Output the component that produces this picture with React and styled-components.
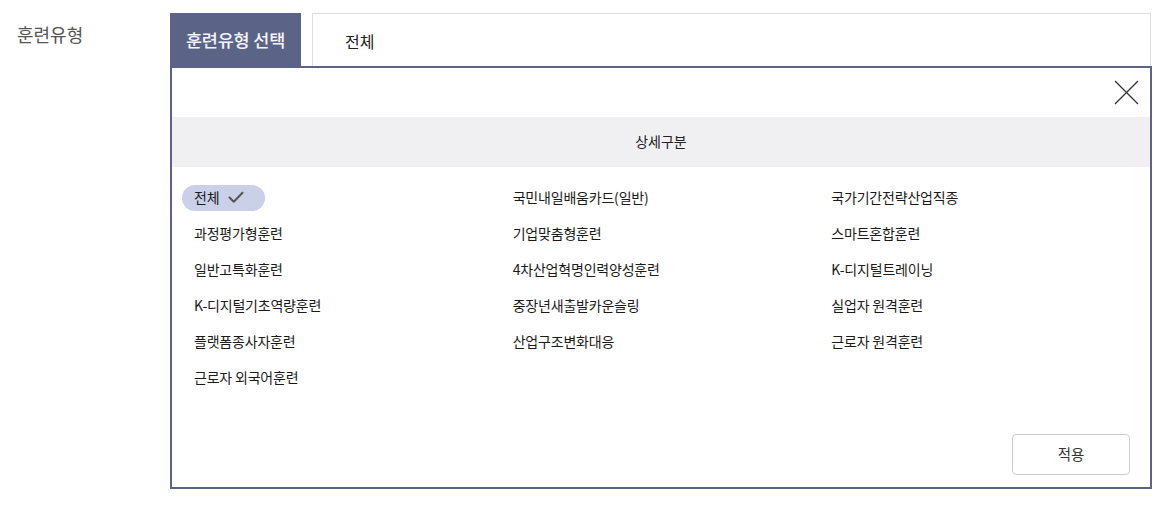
import React from "react";
import styled, { createGlobalStyle } from "styled-components";

const Global = createGlobalStyle`
  html, body { margin: 0; padding: 0; background: #fff; }
  body { font-family: "Noto Sans CJK KR", "Noto Sans", sans-serif; color: #222; }
`;

const Page = styled.div`
  display: flex;
  align-items: flex-start;
  padding-top: 13px;
  width: 1169px;
  height: 510px;
  box-sizing: border-box;
`;

const Label = styled.div`
  width: 170px;
  box-sizing: border-box;
  padding-left: 17px;
  padding-top: 7px;
  font-size: 18px;
  line-height: 28px;
  color: #555;
`;

const Field = styled.div`
  width: 982px;
  display: flex;
  flex-direction: column;
`;

const TopBar = styled.div`
  display: flex;
  gap: 11px;
  height: 53px;
`;

const Tab = styled.div`
  width: 131px;
  background: #5b6387;
  color: #f4f4f8;
  font-size: 17.5px;
  font-weight: 500;
  display: flex;
  align-items: center;
  justify-content: center;
  letter-spacing: -0.2px;
  padding-bottom: 1px;
  box-sizing: border-box;
`;

const Input = styled.div`
  flex: 1;
  border: 1px solid #dedede;
  border-bottom: none;
  margin-right: 1px;
  display: flex;
  align-items: center;
  padding-left: 32px;
  padding-top: 1px;
  font-size: 16px;
  color: #222;
  box-sizing: border-box;
`;

const Panel = styled.div`
  border: 2px solid #5b6387;
  height: 423px;
  box-sizing: border-box;
  display: flex;
  flex-direction: column;
`;

const CloseRow = styled.div`
  height: 49px;
  display: flex;
  justify-content: flex-end;
  align-items: center;
  padding-right: 11px;
`;

const CloseButton = styled.button`
  border: none;
  background: none;
  padding: 0;
  width: 25px;
  height: 25px;
  cursor: pointer;
  display: flex;
`;

const Header = styled.div`
  height: 50px;
  background: #f0f0f3;
  display: flex;
  align-items: center;
  justify-content: center;
  font-size: 14px;
  color: #222;
  padding-bottom: 3px;
  box-sizing: border-box;
`;

const Grid = styled.div`
  display: grid;
  grid-template-columns: repeat(3, 1fr);
  row-gap: 10px;
  padding: 18px 12px 0 10px;
`;

const Item = styled.div`
  height: 26px;
  display: flex;
  align-items: center;
`;

const Option = styled.span`
  display: inline-flex;
  align-items: center;
  gap: 9px;
  height: 26px;
  box-sizing: border-box;
  padding: 0 ${(p) => (p.$selected ? "21px" : "12px")} 3px 12px;
  border-radius: 13px;
  background: ${(p) => (p.$selected ? "#c9d0e7" : "transparent")};
  font-size: 14px;
  color: #1a1a1a;
  letter-spacing: -0.2px;
  white-space: nowrap;

  svg { margin-top: 2px; }
`;

const Footer = styled.div`
  margin-top: auto;
  display: flex;
  justify-content: flex-end;
  padding: 0 20px 12px 0;
`;

const ApplyButton = styled.button`
  width: 118px;
  height: 41px;
  border: 1px solid #cccccc;
  border-radius: 4px;
  background: #fff;
  font-family: "Noto Sans CJK KR", "Noto Sans", sans-serif;
  font-size: 14.5px;
  color: #333;
  padding-bottom: 3px;
  cursor: pointer;
`;

const options = [
  "전체",
  "국민내일배움카드(일반)",
  "국가기간전략산업직종",
  "과정평가형훈련",
  "기업맞춤형훈련",
  "스마트혼합훈련",
  "일반고특화훈련",
  "4차산업혁명인력양성훈련",
  "K-디지털트레이닝",
  "K-디지털기초역량훈련",
  "중장년새출발카운슬링",
  "실업자 원격훈련",
  "플랫폼종사자훈련",
  "산업구조변화대응",
  "근로자 원격훈련",
  "근로자 외국어훈련",
];

const Check = () => (
  <svg width="16" height="13" viewBox="0 0 16 13" fill="none">
    <path d="M1.5 6.5 L5.8 10.8 L14.5 1.8" stroke="#555" strokeWidth="2" strokeLinecap="round" strokeLinejoin="round" />
  </svg>
);

const CloseIcon = () => (
  <svg width="25" height="25" viewBox="0 0 25 25" fill="none">
    <path d="M1 1 L24 24 M24 1 L1 24" stroke="#333" strokeWidth="1.3" />
  </svg>
);

export default function App() {
  return (
    <>
      <Global />
      <Page>
        <Label>훈련유형</Label>
        <Field>
          <TopBar>
            <Tab>훈련유형 선택</Tab>
            <Input>전체</Input>
          </TopBar>
          <Panel>
            <CloseRow>
              <CloseButton aria-label="닫기">
                <CloseIcon />
              </CloseButton>
            </CloseRow>
            <Header>상세구분</Header>
            <Grid>
              {options.map((o, i) => (
                <Item key={o}>
                  <Option $selected={i === 0}>
                    {o}
                    {i === 0 && <Check />}
                  </Option>
                </Item>
              ))}
            </Grid>
            <Footer>
              <ApplyButton>적용</ApplyButton>
            </Footer>
          </Panel>
        </Field>
      </Page>
    </>
  );
}
